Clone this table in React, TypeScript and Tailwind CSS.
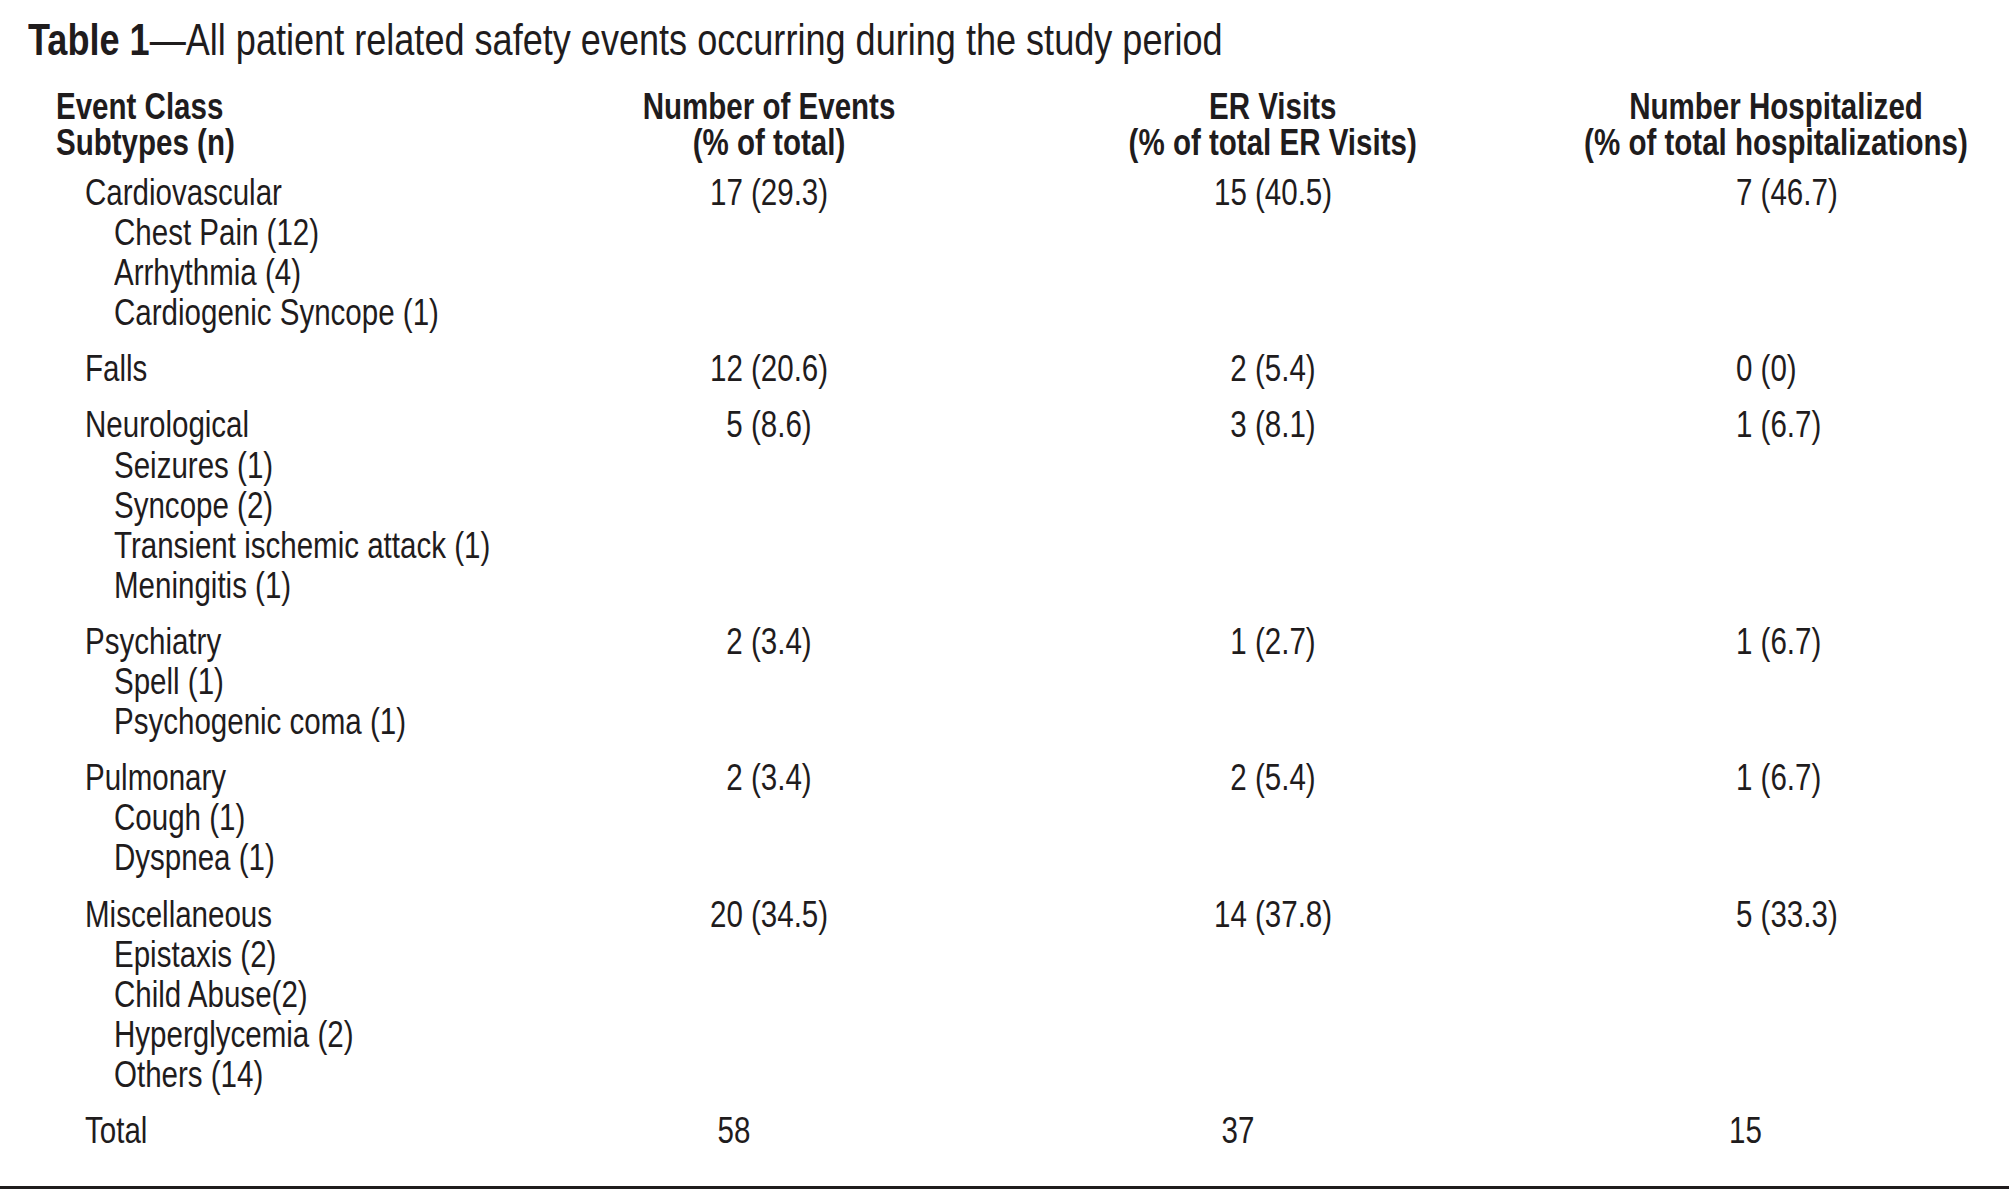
import React from "react";

type Group = {
  name: string;
  subs: string[];
  events: string;
  er: string;
  hosp: string;
};

const groups: Group[] = [
  {
    name: "Cardiovascular",
    subs: ["Chest Pain (12)", "Arrhythmia (4)", "Cardiogenic Syncope (1)"],
    events: "17 (29.3)",
    er: "15 (40.5)",
    hosp: "7 (46.7)",
  },
  { name: "Falls", subs: [], events: "12 (20.6)", er: "2 (5.4)", hosp: "0 (0)" },
  {
    name: "Neurological",
    subs: ["Seizures (1)", "Syncope (2)", "Transient ischemic attack (1)", "Meningitis (1)"],
    events: "5 (8.6)",
    er: "3 (8.1)",
    hosp: "1 (6.7)",
  },
  {
    name: "Psychiatry",
    subs: ["Spell (1)", "Psychogenic coma (1)"],
    events: "2 (3.4)",
    er: "1 (2.7)",
    hosp: "1 (6.7)",
  },
  {
    name: "Pulmonary",
    subs: ["Cough (1)", "Dyspnea (1)"],
    events: "2 (3.4)",
    er: "2 (5.4)",
    hosp: "1 (6.7)",
  },
  {
    name: "Miscellaneous",
    subs: ["Epistaxis (2)", "Child Abuse(2)", "Hyperglycemia (2)", "Others (14)"],
    events: "20 (34.5)",
    er: "14 (37.8)",
    hosp: "5 (33.3)",
  },
];

/* Narrow text: Liberation Sans condensed to Arial Narrow proportions */
function L({ children }: { children: React.ReactNode }) {
  return <span className="inline-block whitespace-nowrap scale-x-[0.82] origin-left">{children}</span>;
}
function C({ children }: { children: React.ReactNode }) {
  return <span className="inline-block whitespace-nowrap scale-x-[0.82] origin-center">{children}</span>;
}

export default function App() {
  return (
    <div className="w-[2009px] h-[1196px] bg-white text-[#1f1c1d] font-['Liberation_Sans',Arial,sans-serif] overflow-hidden">
      <div className="pt-[15px] pl-[28px] text-[44px] leading-[50px]">
        <L>
          <span className="font-bold">Table 1</span>—All patient related safety events occurring during the study period
        </L>
      </div>

      <div className="mt-[24px] flex text-[36px] leading-[36px] font-bold">
        <div className="w-[520px] pl-[56px] flex flex-col items-start">
          <L>Event Class</L>
          <L>Subtypes (n)</L>
        </div>
        <div className="w-[498px] flex flex-col items-center">
          <C>Number of Events</C>
          <C>(% of total)</C>
        </div>
        <div className="w-[510px] flex flex-col items-center">
          <C>ER Visits</C>
          <C>(% of total ER Visits)</C>
        </div>
        <div className="w-[481px] pl-[15px] flex flex-col items-center">
          <C>Number Hospitalized</C>
          <C>(% of total hospitalizations)</C>
        </div>
      </div>

      <div className="mt-[12px] flex flex-col gap-[16px] text-[36px] leading-[40.1px]">
        {groups.map((g) => (
          <div key={g.name} className="flex">
            <div className="w-[520px] flex flex-col items-start">
              <div className="pl-[85px]">
                <L>{g.name}</L>
              </div>
              {g.subs.map((s) => (
                <div key={s} className="pl-[114px]">
                  <L>{s}</L>
                </div>
              ))}
            </div>
            <div className="w-[498px] flex justify-center">
              <C>{g.events}</C>
            </div>
            <div className="w-[510px] flex justify-center">
              <C>{g.er}</C>
            </div>
            <div className="w-[481px] pl-[208px]">
              <L>{g.hosp}</L>
            </div>
          </div>
        ))}
        <div className="flex">
          <div className="w-[520px] pl-[85px]">
            <L>Total</L>
          </div>
          <div className="w-[498px] pr-[70px] flex justify-center">
            <C>58</C>
          </div>
          <div className="w-[510px] pr-[70px] flex justify-center">
            <C>37</C>
          </div>
          <div className="w-[481px] pl-[201px]">
            <L>15</L>
          </div>
        </div>
      </div>

      <div className="mt-[35px] h-[3px] w-full bg-[#1f1c1d]" />
    </div>
  );
}
